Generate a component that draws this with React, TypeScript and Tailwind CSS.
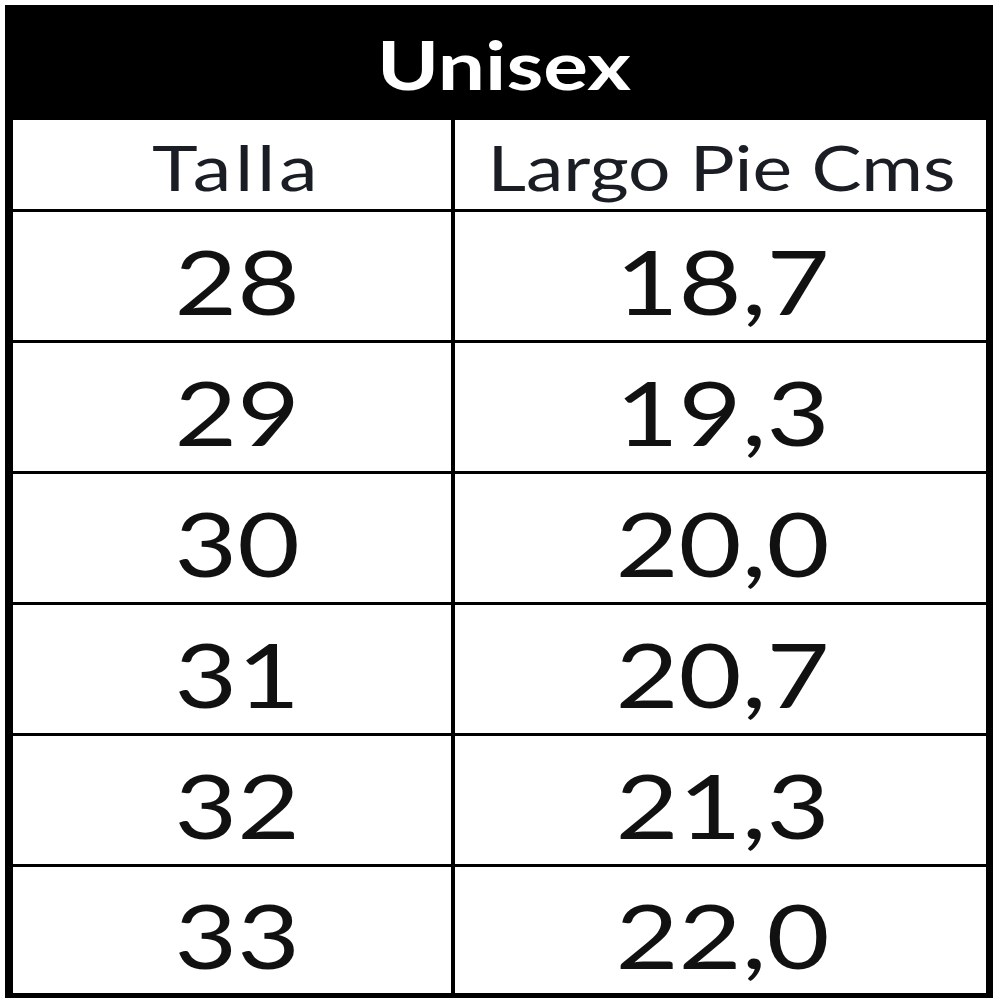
import React from "react";

const rows: [string, string][] = [
  ["28", "18,7"],
  ["29", "19,3"],
  ["30", "20,0"],
  ["31", "20,7"],
  ["32", "21,3"],
  ["33", "22,0"],
];

export default function App() {
  return (
    <div className="w-[1000px] h-[1000px] bg-white pt-[5px] pl-[5px]" style={{ fontFamily: "Lato, 'Open Sans', sans-serif" }}>
      <div className="w-[988px] h-[993px] flex flex-col border-l-[8px] border-r-[7px] border-b-[5px] border-black bg-white">
        <div className="h-[115px] shrink-0 bg-black flex items-center justify-center text-white font-bold text-[66px] leading-none pt-[4px]">
          <span className="inline-block scale-x-127 translate-x-[5px]">Unisex</span>
        </div>
        <div className="h-[92px] shrink-0 grid grid-cols-[442px_1fr] border-b-[3px] border-black text-[#1b1d24] text-[62px] leading-none">
          <div className="flex items-center justify-center border-r-[4px] border-black pt-[5px] pl-[10px]">
            <span className="inline-block scale-x-125 tracking-[3px]">Talla</span>
          </div>
          <div className="flex items-center justify-center pt-[5px] pl-[2px]">
            <span className="inline-block scale-x-121">Largo Pie Cms</span>
          </div>
        </div>
        {rows.map(([a, b], i) => (
          <div
            key={a}
            className={
              "grid grid-cols-[442px_1fr] text-[#111] text-[90px] leading-none " +
              (i < rows.length - 1 ? "h-[131px] shrink-0 border-b-[3px] border-black" : "flex-1")
            }
          >
            <div className="flex items-center justify-center border-r-[4px] border-black pt-[8px] pl-[10px]">
              <span className="inline-block scale-x-120">{a}</span>
            </div>
            <div className="flex items-center justify-center pt-[8px] pl-[4px]">
              <span className="inline-block scale-x-121">{b}</span>
            </div>
          </div>
        ))}
      </div>
    </div>
  );
}
